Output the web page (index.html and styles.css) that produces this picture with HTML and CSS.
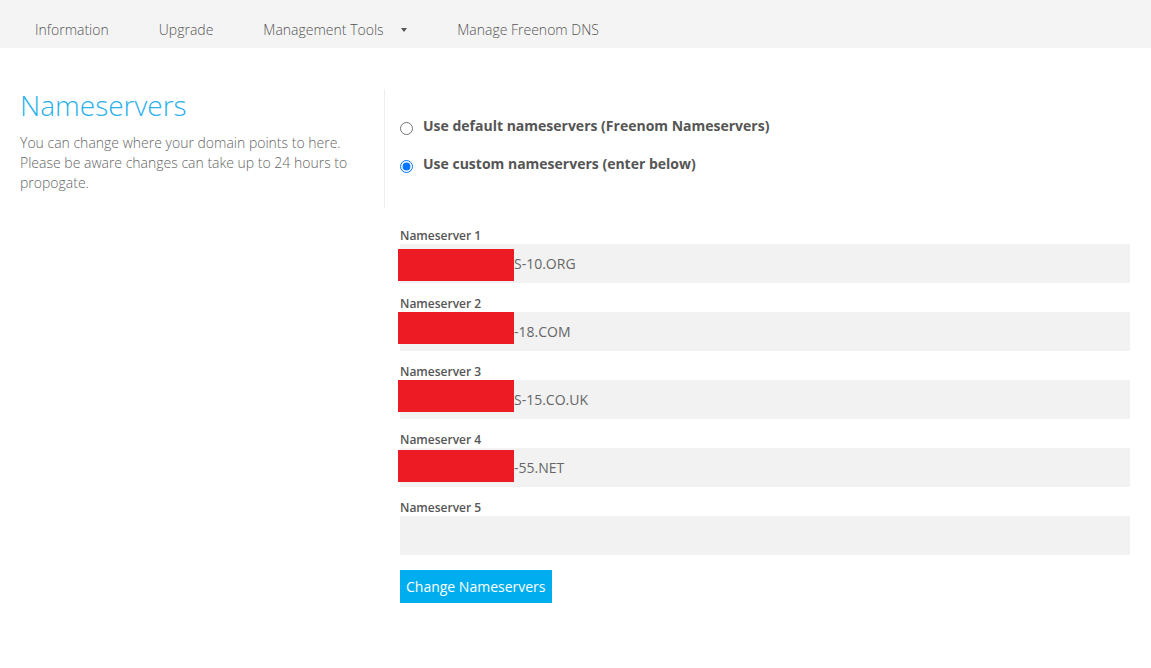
FILE: index.html
```html
<!DOCTYPE html>
<html lang="en">
<head>
    <meta charset="UTF-8">
    <meta name="viewport" content="width=device-width, initial-scale=1.0">
    <title>Nameservers</title>
    <link rel="stylesheet" href="styles.css">
</head>
<body>
    <ul class="tabs">
        <li><a href="#">Information</a></li>
        <li><a href="#">Upgrade</a></li>
        <li><a href="#">Management Tools <span class="caret"></span></a></li>
        <li><a href="#">Manage Freenom DNS</a></li>
    </ul>

    <div class="content">
        <div class="top-row">
            <div class="intro">
                <h2>Nameservers</h2>
                <p>You can change where your domain points to here. Please be aware changes can take up to 24 hours to propogate.</p>
            </div>
            <div class="choices">
                <label class="choice"><input type="radio" name="nstype"> Use default nameservers (Freenom Nameservers)</label>
                <label class="choice"><input type="radio" name="nstype" checked> Use custom nameservers (enter below)</label>
            </div>
        </div>

        <form class="ns-form">
            <div class="group">
                <label>Nameserver 1</label>
                <div class="field"><span class="redact r1"></span>S-10.ORG</div>
            </div>
            <div class="group">
                <label>Nameserver 2</label>
                <div class="field"><span class="redact"></span>-18.COM</div>
            </div>
            <div class="group">
                <label>Nameserver 3</label>
                <div class="field"><span class="redact"></span>S-15.CO.UK</div>
            </div>
            <div class="group">
                <label>Nameserver 4</label>
                <div class="field"><span class="redact r4"></span>-55.NET</div>
            </div>
            <div class="group">
                <label>Nameserver 5</label>
                <div class="field"></div>
            </div>
            <button type="button">Change Nameservers</button>
        </form>
    </div>
</body>
</html>
```

FILE: styles.css
```css
body {
    margin: 0;
    background: #fff;
    font-family: "Open Sans", "Liberation Sans", sans-serif;
    font-size: 14px;
    color: #666;
}

/* Top tabs */
.tabs {
    list-style: none;
    margin: 0;
    padding: 0 0 0 10px;
    height: 48px;
    display: flex;
    background: #f4f4f4;
}

.tabs a {
    display: block;
    padding: 20px 25px 0 25px;
    line-height: 20px;
    font-weight: 300;
    color: #555;
    text-decoration: none;
}

.caret {
    display: inline-block;
    margin-left: 14px;
    width: 0;
    height: 0;
    border-left: 3.5px solid transparent;
    border-right: 3.5px solid transparent;
    border-top: 4px solid #555;
    vertical-align: 3px;
}

/* Page content */
.content {
    padding: 33px 21px 0 20px;
}

.top-row {
    display: flex;
}

.intro {
    width: 364px;
}

.intro h2 {
    margin: 0;
    padding-top: 4px;
    font-size: 28px;
    font-weight: 300;
    line-height: 40px;
    color: #2ab1ec;
}

.intro p {
    margin: 8px 0 0 0;
    line-height: 20px;
    font-weight: 300;
    color: #666;
    padding-right: 20px;
}

.choices {
    flex: 1;
    border-left: 1px solid #eee;
    padding: 27px 0 32px 15px;
    height: 60px;
    margin-top: 8px;
}

.choice {
    display: flex;
    align-items: center;
    font-weight: 700;
    color: #555;
    line-height: 20px;
    margin-bottom: 18px;
}

.choice input {
    margin: 4px 10px 0 0;
    width: 13px;
    height: 13px;
}

/* Nameserver form */
.ns-form {
    margin: 19px 0 0 380px;
}

.group {
    margin-bottom: 12px;
}

.group label {
    display: block;
    font-size: 12px;
    font-weight: 600;
    line-height: 17px;
    color: #555;
}

.field {
    position: relative;
    display: flex;
    align-items: center;
    height: 39px;
    background: #f2f2f2;
    color: #666;
    font-size: 14px;
}

.redact {
    width: 116px;
    height: 32px;
    margin-left: -2px;
    background: #ed1c24;
    align-self: flex-start;
}

.redact.r1 {
    margin-top: 5px;
}

.redact.r4 {
    margin-top: 2px;
}

button {
    margin-top: 3px;
    padding: 0 6px;
    height: 33px;
    border: none;
    background: #00aeef;
    color: #fff;
    font-family: inherit;
    font-size: 14px;
    cursor: pointer;
}
```
